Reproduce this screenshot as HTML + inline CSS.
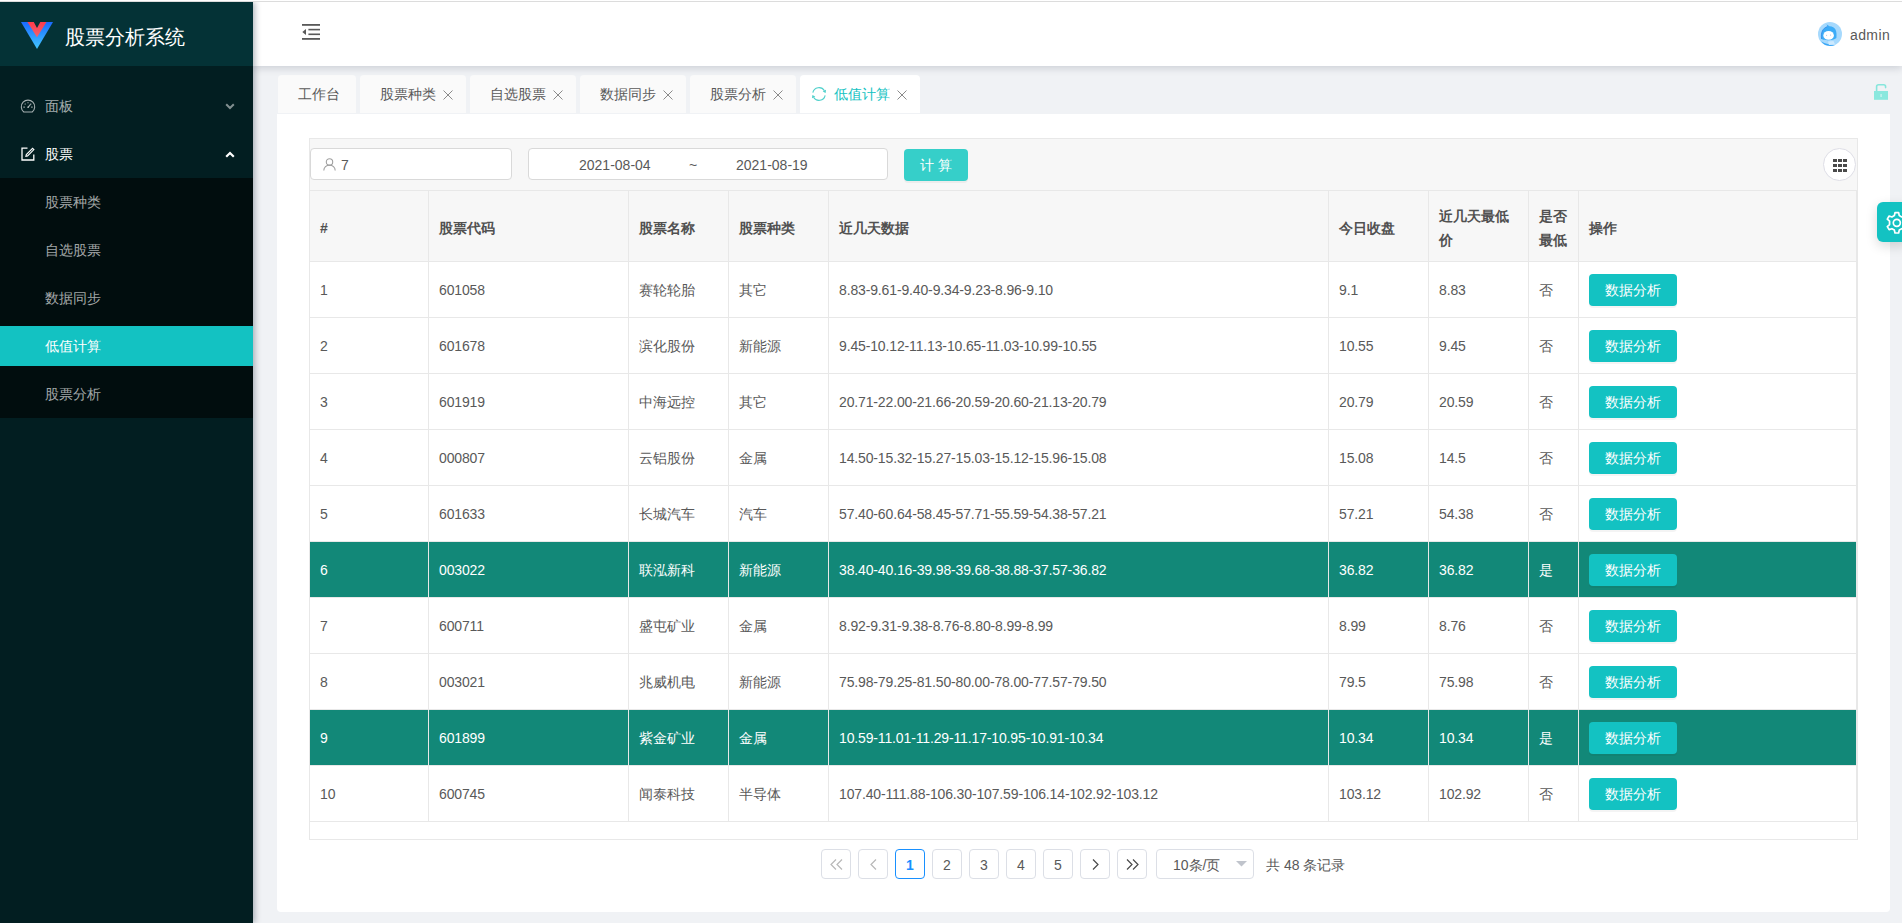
<!DOCTYPE html>
<html><head><meta charset="utf-8">
<style>
*{box-sizing:border-box;margin:0;padding:0}
html,body{width:1902px;height:923px;overflow:hidden}
body{position:relative;background:#f0f2f5;font-family:"Liberation Sans",sans-serif;font-size:14px;color:#595959}
.abs{position:absolute}
#topline{left:0;top:0;width:1902px;height:2px;background:#fff;border-bottom:1px solid #dcdcdc;z-index:4}
#side{left:0;top:2px;width:253px;height:921px;background:#021e21;box-shadow:2px 0 6px rgba(0,21,41,.3);z-index:3}
#logo{left:0;top:0;width:253px;height:64px;background:#043236}
#logo .t{position:absolute;left:65px;top:23px;font-size:20px;color:#fff;line-height:24px;letter-spacing:0}
.mi{position:absolute;left:0;width:253px;height:48px;line-height:48px;color:rgba(255,255,255,.65)}
.mi .tx{position:absolute;left:45px;top:0}
.mi.open{color:#fff}
#sub{left:0;top:176px;width:253px;height:240px;background:#010d0e}
.si{position:absolute;left:0;width:253px;height:40px;line-height:40px;padding-left:45px;color:rgba(255,255,255,.65)}
.si.act{background:#13c2c2;color:#fff}
#header{left:253px;top:2px;width:1649px;height:64px;background:#fff;box-shadow:0 2px 8px rgba(0,21,41,.16);z-index:2}
.uname{position:absolute;left:1597px;top:1px;line-height:64px;color:#595959;letter-spacing:0.4px}
.tab{position:absolute;top:75px;height:38px;line-height:38px;background:#fafafa;border-radius:4px 4px 0 0;padding-left:20px;color:#595959;white-space:nowrap}
.tab .x{position:absolute;top:15px;width:10px;height:10px}
.tab.act{background:#fff;color:#13c2c2}
#card{left:277px;top:114px;width:1613px;height:798px;background:#fff;border-radius:0 0 4px 4px}
#wrap{left:309px;top:138px;width:1549px;height:702px;border:1px solid #e8e8e8;background:#fff}
#tool{left:0;top:0;width:1547px;height:52px;background:#f7f7f7}
.inp{position:absolute;height:32px;border:1px solid #d9d9d9;border-radius:4px;background:#fff}
#calc{position:absolute;left:904px;top:149px;width:64px;height:32px;background:#36cfc9;border-radius:4px;color:#fff;text-align:center;line-height:32px;letter-spacing:4px;padding-left:4px;box-shadow:0 2px 0 rgba(0,0,0,.045)}
.th{position:absolute;top:191px;height:70px;background:#f7f7f7;font-weight:bold;color:#515151;display:flex;align-items:center;padding:4px 10px 0;line-height:24px}
.tr{position:absolute;left:310px;width:1546px;height:56px;border-bottom:1px solid #e8e8e8;background:#fff}
.tr.hl{background:#128878;color:#fff}
.td{position:absolute;top:1px;height:55px;line-height:55px;padding-left:10px;white-space:nowrap;letter-spacing:-0.14px}
.btn{position:absolute;top:12px;width:88px;height:32px;line-height:32px;text-align:center;background:#13c2c2;color:#fff;border-radius:4px;box-shadow:0 2px 0 rgba(0,0,0,.045)}
.vl{position:absolute;top:190px;width:1px;height:632px;background:#e8e8e8}
.hl2{position:absolute;height:1px;background:#e8e8e8}
.pg{position:absolute;top:849px;width:30px;height:30px;border:1px solid #dcdfe6;border-radius:4px;background:#fff;text-align:center;line-height:30px;color:#595959}
.pg.cur{border-color:#1890ff;color:#1890ff;font-weight:bold}
</style></head><body>
<div id="topline" class="abs"></div>
<div id="side" class="abs">
  <div id="logo" class="abs">
    <svg class="abs" style="left:0;top:-2px" width="60" height="60" viewBox="0 0 60 60">
      <defs><linearGradient id="lg" x1="0" y1="22" x2="0" y2="49" gradientUnits="userSpaceOnUse"><stop offset="0" stop-color="#1a6aff"/><stop offset="1" stop-color="#42c8ff"/></linearGradient>
      <linearGradient id="lr" x1="0" y1="22" x2="0" y2="37" gradientUnits="userSpaceOnUse"><stop offset="0" stop-color="#ff3b4c"/><stop offset="1" stop-color="#f0636e"/></linearGradient></defs>
      <polygon points="21,22 53,22 37,49" fill="url(#lg)"/>
      <polygon points="27.4,22 46.5,22 37,37.3" fill="url(#lr)"/>
      <polygon points="33.8,22 40.3,22 37,28" fill="#043236"/>
    </svg>
    <div class="t">股票分析系统</div>
  </div>
  <div class="mi" style="top:80px">
    <svg class="abs" style="left:20px;top:16px" width="16" height="16" viewBox="0 1.4 16 16" fill="none" stroke="currentColor" stroke-width="1.1">
      <path d="M3.78 15.4 A6.7 6.7 0 1 1 12.22 15.4 Z"/>
      <path d="M8 10.7 L10.5 7.8" stroke-width="1.1"/>
      <circle cx="8" cy="10.7" r="0.8" fill="currentColor" stroke="none"/>
      <path d="M3.4 10.5 H4.8 M11.2 10.5 H12.6 M4.7 7.1 L5.6 7.8 M8 5.6 V6.6 M11.3 7.1 L10.4 7.8"/>
    </svg>
    <span class="tx">面板</span>
    <svg class="abs" style="left:225px;top:21px" width="10" height="7" viewBox="0 0 10 7" fill="none" stroke="rgba(255,255,255,.5)" stroke-width="2"><path d="M1.2 1.2 L5 5 L8.8 1.2"/></svg>
  </div>
  <div class="mi open" style="top:128px">
    <svg class="abs" style="left:21px;top:17px" width="14" height="14" viewBox="0 0 14 14" fill="none" stroke="currentColor" stroke-width="1.3">
      <path d="M6.5 1.2 H1 V13 H12.8 V7.5"/>
      <path d="M11.6 1.3 L12.9 2.6 L6.6 8.9 L4.9 9.3 L5.3 7.6 Z" stroke-width="1.1"/>
    </svg>
    <span class="tx">股票</span>
    <svg class="abs" style="left:225px;top:21px" width="10" height="7" viewBox="0 0 10 7" fill="none" stroke="currentColor" stroke-width="2.2"><path d="M1.2 5.8 L5 2 L8.8 5.8"/></svg>
  </div>
  <div id="sub" class="abs">
    <div class="si" style="top:4px">股票种类</div>
    <div class="si" style="top:52px">自选股票</div>
    <div class="si" style="top:100px">数据同步</div>
    <div class="si act" style="top:148px">低值计算</div>
    <div class="si" style="top:196px">股票分析</div>
  </div>
</div>
<div id="header" class="abs">
  <svg class="abs" style="left:49px;top:22px" width="18" height="16" viewBox="0 0 18 16" fill="#595959">
    <rect x="0" y="0" width="18" height="1.8"/>
    <rect x="6.4" y="4.8" width="11.6" height="1.6"/>
    <rect x="6.4" y="9.5" width="11.6" height="1.6"/>
    <rect x="0" y="14" width="18" height="1.8"/>
    <polygon points="0.3,8 4,5 4,11"/>
  </svg>
  <svg class="abs" style="left:1565px;top:20px" width="24" height="24" viewBox="0 0 24 24">
    <circle cx="12" cy="12" r="12" fill="#a6d9fd"/>
    <path d="M3.2 19.2 Q6 23.6 12 24 Q15 24 17 23 Q9 23 3.2 19.2 Z" fill="#3aa6f6"/>
    <path d="M3.6 17 C2.6 11 4.6 6 9.5 4.6 L8.5 2.2 L11.5 4.3 C17.5 4.5 19.2 9 18.4 16 C15.5 18.6 6.5 18.8 3.6 17 Z" fill="#3cacf7"/>
    <path d="M3.6 17 C2.6 11 4.6 6 9.5 4.6" fill="none" stroke="#2f86e6" stroke-width="0.8"/>
    <ellipse cx="10.6" cy="13.4" rx="5.3" ry="4.4" fill="#fff"/>
    <path d="M10 19.5 L15.5 19 L17 22.5 L11 23 Z" fill="#cde9fe"/>
    <circle cx="8.6" cy="13.3" r="0.5" fill="#8fb3d9"/><circle cx="12.6" cy="13" r="0.5" fill="#8fb3d9"/>
  </svg>
  <div class="uname">admin</div>
</div>
<!-- tabs -->
<div class="tab" style="left:278px;width:78px">工作台</div>
<div class="tab" style="left:360px;width:106px">股票种类<svg class="x" style="left:83px" viewBox="0 0 10 10" stroke="#8a8a8a" stroke-width="1"><path d="M0.5 0.5L9.5 9.5M9.5 0.5L0.5 9.5"/></svg></div>
<div class="tab" style="left:470px;width:106px">自选股票<svg class="x" style="left:83px" viewBox="0 0 10 10" stroke="#8a8a8a" stroke-width="1"><path d="M0.5 0.5L9.5 9.5M9.5 0.5L0.5 9.5"/></svg></div>
<div class="tab" style="left:580px;width:106px">数据同步<svg class="x" style="left:83px" viewBox="0 0 10 10" stroke="#8a8a8a" stroke-width="1"><path d="M0.5 0.5L9.5 9.5M9.5 0.5L0.5 9.5"/></svg></div>
<div class="tab" style="left:690px;width:106px">股票分析<svg class="x" style="left:83px" viewBox="0 0 10 10" stroke="#8a8a8a" stroke-width="1"><path d="M0.5 0.5L9.5 9.5M9.5 0.5L0.5 9.5"/></svg></div>
<div class="tab act" style="left:800px;width:120px;padding-left:34px">
  <svg class="abs" style="left:12px;top:12px" width="14" height="14" viewBox="0 0 14 14" fill="none" stroke="#4fd0cb" stroke-width="1.1">
    <path d="M0.84 5.69 A6.3 6.3 0 0 1 12.46 3.85"/><path d="M13.16 8.31 A6.3 6.3 0 0 1 1.54 10.15"/>
    <path d="M14 2.7 L13.6 6.0 L10.7 4.6 Z" fill="#4fd0cb" stroke="none"/><path d="M0 11.3 L0.4 8.0 L3.3 9.4 Z" fill="#4fd0cb" stroke="none"/>
  </svg>
  低值计算<svg class="x" style="left:97px" viewBox="0 0 10 10" stroke="#8a8a8a" stroke-width="1"><path d="M0.5 0.5L9.5 9.5M9.5 0.5L0.5 9.5"/></svg></div>
<!-- lock -->
<svg class="abs" style="left:1873px;top:83px" width="16" height="18" viewBox="0 0 16 18">
  <path d="M3.6 8.5 V3.8 Q3.6 1.8 5.6 1.8 H10.6 Q12.6 1.8 12.6 3.8 V4.6" fill="none" stroke="#86e6dc" stroke-width="1.6" stroke-linecap="round"/>
  <rect x="1" y="8" width="14" height="8.8" fill="#8ae8de"/>
  <rect x="7.4" y="11" width="1.4" height="3" fill="#c8f3ee"/>
</svg>
<div id="card" class="abs"></div>
<div id="wrap" class="abs"><div id="tool" class="abs"></div></div>
<!-- search -->
<div class="inp" style="left:310px;top:148px;width:202px">
  <svg class="abs" style="left:12px;top:9px" width="13" height="13" viewBox="0 0 13 13" fill="none" stroke="#a0a0a0" stroke-width="1.1"><circle cx="6.5" cy="4" r="3.2"/><path d="M0.8 12.6 A5.7 5.5 0 0 1 12.2 12.6"/></svg>
  <span class="abs" style="left:30px;top:1px;line-height:31px;color:#595959">7</span>
</div>
<div class="inp" style="left:528px;top:148px;width:360px">
  <span class="abs" style="left:50px;top:1px;line-height:31px">2021-08-04</span>
  <span class="abs" style="left:160px;top:1px;line-height:31px">~</span>
  <span class="abs" style="left:207px;top:1px;line-height:31px">2021-08-19</span>
</div>
<div id="calc">计算</div>
<!-- grid button -->
<div class="abs" style="left:1823px;top:148px;width:33px;height:33px;border-radius:50%;background:#fff;border:1px solid #dedee6"></div>
<svg class="abs" style="left:1833px;top:159px" width="14" height="13" viewBox="0 0 14 13" fill="#4a4a4a">
  <rect x="0" y="0" width="4" height="3"/><rect x="5" y="0" width="4" height="3"/><rect x="10" y="0" width="4" height="3"/>
  <rect x="0" y="5" width="4" height="3"/><rect x="5" y="5" width="4" height="3"/><rect x="10" y="5" width="4" height="3"/>
  <rect x="0" y="10" width="4" height="3"/><rect x="5" y="10" width="4" height="3"/><rect x="10" y="10" width="4" height="3"/>
</svg>
<!-- table -->
<div class="hl2" style="left:309px;top:190px;width:1548px"></div>
<div class="hl2" style="left:309px;top:261px;width:1548px"></div>
<div class="th" style="left:310px;width:118px"><span>#</span></div>
<div class="th" style="left:429px;width:199px"><span>股票代码</span></div>
<div class="th" style="left:629px;width:99px"><span>股票名称</span></div>
<div class="th" style="left:729px;width:99px"><span>股票种类</span></div>
<div class="th" style="left:829px;width:499px"><span>近几天数据</span></div>
<div class="th" style="left:1329px;width:99px"><span>今日收盘</span></div>
<div class="th" style="left:1429px;width:99px"><span>近几天最低价</span></div>
<div class="th" style="left:1529px;width:49px"><span>是否最低</span></div>
<div class="th" style="left:1579px;width:277px"><span>操作</span></div>
<div class="tr" style="top:262px">
<div class="td" style="left:0px;width:118px">1</div>
<div class="td" style="left:119px;width:199px">601058</div>
<div class="td" style="left:319px;width:99px">赛轮轮胎</div>
<div class="td" style="left:419px;width:99px">其它</div>
<div class="td" style="left:519px;width:499px">8.83-9.61-9.40-9.34-9.23-8.96-9.10</div>
<div class="td" style="left:1019px;width:99px">9.1</div>
<div class="td" style="left:1119px;width:99px">8.83</div>
<div class="td" style="left:1219px;width:49px">否</div>
<div class="btn" style="left:1279px">数据分析</div>
</div>
<div class="tr" style="top:318px">
<div class="td" style="left:0px;width:118px">2</div>
<div class="td" style="left:119px;width:199px">601678</div>
<div class="td" style="left:319px;width:99px">滨化股份</div>
<div class="td" style="left:419px;width:99px">新能源</div>
<div class="td" style="left:519px;width:499px">9.45-10.12-11.13-10.65-11.03-10.99-10.55</div>
<div class="td" style="left:1019px;width:99px">10.55</div>
<div class="td" style="left:1119px;width:99px">9.45</div>
<div class="td" style="left:1219px;width:49px">否</div>
<div class="btn" style="left:1279px">数据分析</div>
</div>
<div class="tr" style="top:374px">
<div class="td" style="left:0px;width:118px">3</div>
<div class="td" style="left:119px;width:199px">601919</div>
<div class="td" style="left:319px;width:99px">中海远控</div>
<div class="td" style="left:419px;width:99px">其它</div>
<div class="td" style="left:519px;width:499px">20.71-22.00-21.66-20.59-20.60-21.13-20.79</div>
<div class="td" style="left:1019px;width:99px">20.79</div>
<div class="td" style="left:1119px;width:99px">20.59</div>
<div class="td" style="left:1219px;width:49px">否</div>
<div class="btn" style="left:1279px">数据分析</div>
</div>
<div class="tr" style="top:430px">
<div class="td" style="left:0px;width:118px">4</div>
<div class="td" style="left:119px;width:199px">000807</div>
<div class="td" style="left:319px;width:99px">云铝股份</div>
<div class="td" style="left:419px;width:99px">金属</div>
<div class="td" style="left:519px;width:499px">14.50-15.32-15.27-15.03-15.12-15.96-15.08</div>
<div class="td" style="left:1019px;width:99px">15.08</div>
<div class="td" style="left:1119px;width:99px">14.5</div>
<div class="td" style="left:1219px;width:49px">否</div>
<div class="btn" style="left:1279px">数据分析</div>
</div>
<div class="tr" style="top:486px">
<div class="td" style="left:0px;width:118px">5</div>
<div class="td" style="left:119px;width:199px">601633</div>
<div class="td" style="left:319px;width:99px">长城汽车</div>
<div class="td" style="left:419px;width:99px">汽车</div>
<div class="td" style="left:519px;width:499px">57.40-60.64-58.45-57.71-55.59-54.38-57.21</div>
<div class="td" style="left:1019px;width:99px">57.21</div>
<div class="td" style="left:1119px;width:99px">54.38</div>
<div class="td" style="left:1219px;width:49px">否</div>
<div class="btn" style="left:1279px">数据分析</div>
</div>
<div class="tr hl" style="top:542px">
<div class="td" style="left:0px;width:118px">6</div>
<div class="td" style="left:119px;width:199px">003022</div>
<div class="td" style="left:319px;width:99px">联泓新科</div>
<div class="td" style="left:419px;width:99px">新能源</div>
<div class="td" style="left:519px;width:499px">38.40-40.16-39.98-39.68-38.88-37.57-36.82</div>
<div class="td" style="left:1019px;width:99px">36.82</div>
<div class="td" style="left:1119px;width:99px">36.82</div>
<div class="td" style="left:1219px;width:49px">是</div>
<div class="btn" style="left:1279px">数据分析</div>
</div>
<div class="tr" style="top:598px">
<div class="td" style="left:0px;width:118px">7</div>
<div class="td" style="left:119px;width:199px">600711</div>
<div class="td" style="left:319px;width:99px">盛屯矿业</div>
<div class="td" style="left:419px;width:99px">金属</div>
<div class="td" style="left:519px;width:499px">8.92-9.31-9.38-8.76-8.80-8.99-8.99</div>
<div class="td" style="left:1019px;width:99px">8.99</div>
<div class="td" style="left:1119px;width:99px">8.76</div>
<div class="td" style="left:1219px;width:49px">否</div>
<div class="btn" style="left:1279px">数据分析</div>
</div>
<div class="tr" style="top:654px">
<div class="td" style="left:0px;width:118px">8</div>
<div class="td" style="left:119px;width:199px">003021</div>
<div class="td" style="left:319px;width:99px">兆威机电</div>
<div class="td" style="left:419px;width:99px">新能源</div>
<div class="td" style="left:519px;width:499px">75.98-79.25-81.50-80.00-78.00-77.57-79.50</div>
<div class="td" style="left:1019px;width:99px">79.5</div>
<div class="td" style="left:1119px;width:99px">75.98</div>
<div class="td" style="left:1219px;width:49px">否</div>
<div class="btn" style="left:1279px">数据分析</div>
</div>
<div class="tr hl" style="top:710px">
<div class="td" style="left:0px;width:118px">9</div>
<div class="td" style="left:119px;width:199px">601899</div>
<div class="td" style="left:319px;width:99px">紫金矿业</div>
<div class="td" style="left:419px;width:99px">金属</div>
<div class="td" style="left:519px;width:499px">10.59-11.01-11.29-11.17-10.95-10.91-10.34</div>
<div class="td" style="left:1019px;width:99px">10.34</div>
<div class="td" style="left:1119px;width:99px">10.34</div>
<div class="td" style="left:1219px;width:49px">是</div>
<div class="btn" style="left:1279px">数据分析</div>
</div>
<div class="tr" style="top:766px">
<div class="td" style="left:0px;width:118px">10</div>
<div class="td" style="left:119px;width:199px">600745</div>
<div class="td" style="left:319px;width:99px">闻泰科技</div>
<div class="td" style="left:419px;width:99px">半导体</div>
<div class="td" style="left:519px;width:499px">107.40-111.88-106.30-107.59-106.14-102.92-103.12</div>
<div class="td" style="left:1019px;width:99px">103.12</div>
<div class="td" style="left:1119px;width:99px">102.92</div>
<div class="td" style="left:1219px;width:49px">否</div>
<div class="btn" style="left:1279px">数据分析</div>
</div>
<div class="vl" style="left:428px"></div>
<div class="vl" style="left:628px"></div>
<div class="vl" style="left:728px"></div>
<div class="vl" style="left:828px"></div>
<div class="vl" style="left:1328px"></div>
<div class="vl" style="left:1428px"></div>
<div class="vl" style="left:1528px"></div>
<div class="vl" style="left:1578px"></div>
<div class="abs" style="left:1856px;top:190px;width:1px;height:632px;background:#e8e8e8"></div>
<!-- pagination -->
<div class="pg" style="left:821px"><svg class="abs" style="left:8px;top:9px" width="13" height="11" viewBox="0 0 13 11" fill="none" stroke="#b8b8b8" stroke-width="1.2"><path d="M6 0.5L1 5.5L6 10.5M12 0.5L7 5.5L12 10.5"/></svg></div>
<div class="pg" style="left:858px"><svg class="abs" style="left:11px;top:9px" width="7" height="11" viewBox="0 0 7 11" fill="none" stroke="#b8b8b8" stroke-width="1.2"><path d="M6 0.5L1 5.5L6 10.5"/></svg></div>
<div class="pg cur" style="left:895px">1</div>
<div class="pg" style="left:932px">2</div>
<div class="pg" style="left:969px">3</div>
<div class="pg" style="left:1006px">4</div>
<div class="pg" style="left:1043px">5</div>
<div class="pg" style="left:1080px"><svg class="abs" style="left:11px;top:9px" width="7" height="11" viewBox="0 0 7 11" fill="none" stroke="#4a4a4a" stroke-width="1.2"><path d="M1 0.5L6 5.5L1 10.5"/></svg></div>
<div class="pg" style="left:1117px"><svg class="abs" style="left:8px;top:9px" width="13" height="11" viewBox="0 0 13 11" fill="none" stroke="#4a4a4a" stroke-width="1.2"><path d="M1 0.5L6 5.5L1 10.5M7 0.5L12 5.5L7 10.5"/></svg></div>
<div class="pg" style="left:1156px;width:98px;text-align:left;padding-left:16px">10条/页<svg class="abs" style="left:79px;top:11px" width="11" height="6" viewBox="0 0 11 6"><path d="M0 0H11L5.5 5.5Z" fill="#c0c4cc"/></svg></div>
<div class="abs" style="left:1266px;top:850px;line-height:30px">共 48 条记录</div>
<!-- gear -->
<div class="abs" style="left:1877px;top:202px;width:30px;height:40px;background:#13c2c2;border-radius:6px 0 0 6px;box-shadow:0 4px 12px rgba(0,0,0,.15)"></div>
<svg class="abs" style="left:1884px;top:210px" width="23.5" height="25.7" viewBox="0 0 22 24" fill="none" stroke="#fff" stroke-width="1.6">
  <circle cx="12" cy="12" r="3.3"/>
  <path d="M10.3 2.5 H13.7 L14.3 5.2 L16.6 6.5 L19.2 5.6 L20.9 8.5 L18.8 10.4 V13.6 L20.9 15.5 L19.2 18.4 L16.6 17.5 L14.3 18.8 L13.7 21.5 H10.3 L9.7 18.8 L7.4 17.5 L4.8 18.4 L3.1 15.5 L5.2 13.6 V10.4 L3.1 8.5 L4.8 5.6 L7.4 6.5 L9.7 5.2 Z" stroke-linejoin="round"/>
</svg>
</body></html>
